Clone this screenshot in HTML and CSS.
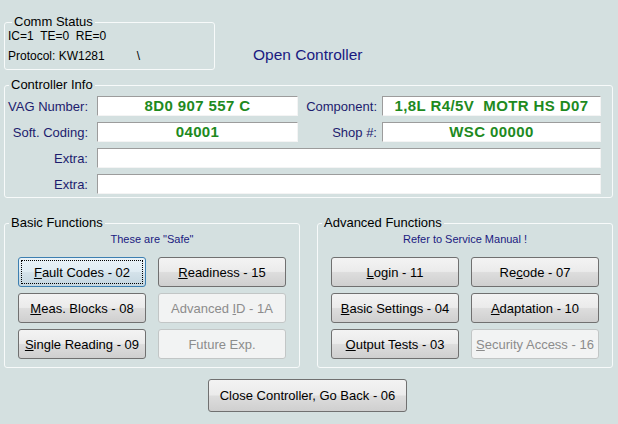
FILE: index.html
```html
<!DOCTYPE html>
<html>
<head>
<meta charset="utf-8">
<link rel="stylesheet" href="styles.css">
</head>
<body>
<div class="top-row">
  <div class="group comm">
    <div class="group-title">Comm Status</div>
    <div class="comm-body">
      <div class="comm-line">IC=1  TE=0  RE=0</div>
      <div class="comm-line">Protocol: KW1281<span class="spinner">\</span></div>
    </div>
  </div>
  <div class="open-title">Open Controller</div>
</div>

<div class="group info">
  <div class="group-title">Controller Info</div>
  <div class="info-grid">
    <div class="lbl">VAG Number:</div>
    <div class="field">8D0 907 557 C</div>
    <div class="lbl lbl-right">Component:</div>
    <div class="field">1,8L R4/5V  MOTR HS D07</div>

    <div class="lbl">Soft. Coding:</div>
    <div class="field">04001</div>
    <div class="lbl lbl-right">Shop #:</div>
    <div class="field">WSC 00000</div>

    <div class="lbl">Extra:</div>
    <div class="field field-wide"></div>

    <div class="lbl">Extra:</div>
    <div class="field field-wide"></div>
  </div>
</div>

<div class="func-row">
  <div class="group func">
    <div class="group-title">Basic Functions</div>
    <div class="func-sub">These are "Safe"</div>
    <div class="btn-grid">
      <button class="btn focused"><u>F</u>ault Codes - 02</button>
      <button class="btn"><u>R</u>eadiness - 15</button>
      <button class="btn"><u>M</u>eas. Blocks - 08</button>
      <button class="btn disabled">Advanced <u>I</u>D - 1A</button>
      <button class="btn"><u>S</u>ingle Reading - 09</button>
      <button class="btn disabled">Future Exp.</button>
    </div>
  </div>
  <div class="group func">
    <div class="group-title">Advanced Functions</div>
    <div class="func-sub">Refer to Service Manual !</div>
    <div class="btn-grid">
      <button class="btn"><u>L</u>ogin - 11</button>
      <button class="btn">Re<u>c</u>ode - 07</button>
      <button class="btn"><u>B</u>asic Settings - 04</button>
      <button class="btn"><u>A</u>daptation - 10</button>
      <button class="btn"><u>O</u>utput Tests - 03</button>
      <button class="btn disabled"><u>S</u>ecurity Access - 16</button>
    </div>
  </div>
</div>

<div class="close-row">
  <button class="btn close-btn">Close Controller, Go Back - 06</button>
</div>
</body>
</html>
```

FILE: styles.css
```css
html, body {
  margin: 0;
  padding: 0;
}
body {
  width: 618px;
  height: 424px;
  box-sizing: border-box;
  padding: 22px 0 0 4px;
  background: #d4e0e0;
  font-family: "Liberation Sans", Arial, sans-serif;
  font-size: 13px;
  color: #000;
  overflow: hidden;
}

.group {
  box-sizing: border-box;
  border: 1px solid #f7fafa;
  border-radius: 3px;
}
.group-title {
  display: table;
  margin: -9px 0 0 4px;
  padding: 0 2px;
  line-height: 15px;
  font-size: 13px;
  background: #d4e0e0;
  color: #000;
}

/* top row */
.top-row {
  display: flex;
  align-items: flex-start;
}
.comm {
  width: 211px;
  padding: 0 0 3px 3px;
}
.comm-body {
  margin-top: -3px;
  font-size: 12px;
  line-height: 20px;
}
.comm-line {
  white-space: pre;
}
.spinner {
  margin-left: 32px;
}
.open-title {
  margin: 24px 0 0 38px;
  font-size: 15.5px;
  line-height: 18px;
  color: #1a1a80;
}

/* controller info */
.info {
  width: 609px;
  margin-top: 15px;
  padding-bottom: 3px;
}
.info-grid {
  margin-top: 4px;
  display: grid;
  grid-template-columns: 92px 201px 84px 219px;
  grid-auto-rows: 20px;
  row-gap: 6px;
}
.lbl {
  align-self: center;
  text-align: right;
  padding-right: 9px;
  color: #1c1c6e;
  line-height: 15px;
}
.lbl-right {
  padding-right: 5px;
}
.field {
  box-sizing: border-box;
  background: #fff;
  border-top: 1px solid #9c9c9c;
  border-left: 1px solid #9c9c9c;
  border-right: 1px solid #f4f4f4;
  border-bottom: 1px solid #f4f4f4;
  text-align: center;
  font-weight: bold;
  font-size: 15px;
  letter-spacing: 0.4px;
  line-height: 18px;
  color: #1e8a1e;
  white-space: pre;
}
.field-wide {
  grid-column: 2 / 5;
}

/* function groups */
.func-row {
  display: flex;
  column-gap: 17px;
  margin-top: 25px;
}
.func {
  width: 296px;
  padding-bottom: 8px;
}
.func-sub {
  margin-top: 3px;
  text-align: center;
  font-size: 11px;
  line-height: 13px;
  color: #1a1a80;
}
.btn-grid {
  margin-top: 11px;
  display: grid;
  grid-template-columns: 128px 128px;
  grid-auto-rows: 30px;
  column-gap: 12px;
  row-gap: 6px;
  justify-content: center;
}

.btn {
  box-sizing: border-box;
  margin: 0;
  padding: 0;
  font-family: "Liberation Sans", Arial, sans-serif;
  font-size: 13px;
  color: #000;
  border: 1px solid #707070;
  border-radius: 3px;
  background: linear-gradient(#f3f3f3 0%, #ebebeb 48%, #dddddd 52%, #cfcfcf 100%);
  white-space: nowrap;
}
.btn u {
  text-underline-offset: 1px;
}
.btn.focused {
  border-color: #3c7fb1;
  background: linear-gradient(#eaf3f8 0%, #e0ecf3 48%, #d4e2ea 52%, #c4d6e0 100%);
  outline: 1px dotted #000;
  outline-offset: -4px;
}
.btn.disabled {
  border-color: #c2c6c6;
  background: #f2f3f3;
  color: #8c8c8c;
}

.close-row {
  margin-top: 11px;
  padding-left: 204px;
}
.close-btn {
  width: 199px;
  height: 33px;
}
```
